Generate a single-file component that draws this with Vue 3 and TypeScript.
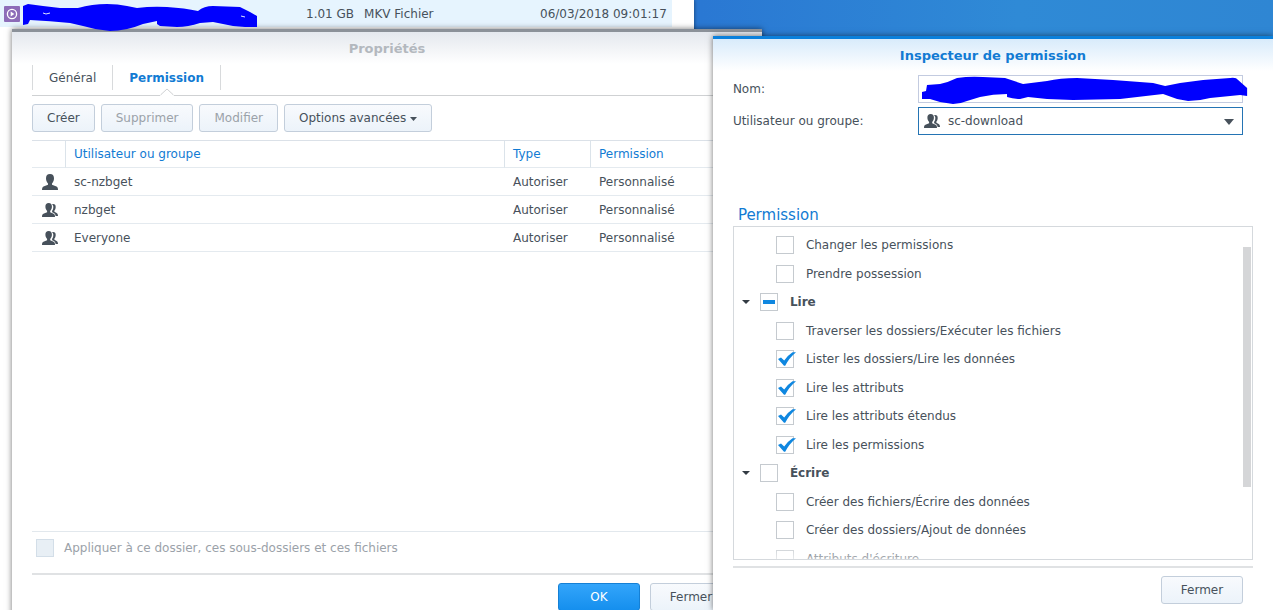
<script setup lang="ts">
import { ref } from 'vue'

interface Principal {
  name: string
  kind: 'user' | 'group'
  type: string
  permission: string
}

interface Node {
  label: string
  group?: boolean
  checked: boolean
  partial?: boolean
}

const principals: Principal[] = [
  { name: 'sc-nzbget', kind: 'user', type: 'Autoriser', permission: 'Personnalisé' },
  { name: 'nzbget', kind: 'group', type: 'Autoriser', permission: 'Personnalisé' },
  { name: 'Everyone', kind: 'group', type: 'Autoriser', permission: 'Personnalisé' },
]

const nodes = ref<Node[]>([
  { label: 'Changer les permissions', checked: false },
  { label: 'Prendre possession', checked: false },
  { label: 'Lire', group: true, checked: false, partial: true },
  { label: 'Traverser les dossiers/Exécuter les fichiers', checked: false },
  { label: 'Lister les dossiers/Lire les données', checked: true },
  { label: 'Lire les attributs', checked: true },
  { label: 'Lire les attributs étendus', checked: true },
  { label: 'Lire les permissions', checked: true },
  { label: 'Écrire', group: true, checked: false },
  { label: 'Créer des fichiers/Écrire des données', checked: false },
  { label: 'Créer des dossiers/Ajout de données', checked: false },
  { label: "Attributs d'écriture", checked: false },
])

const account = ref('sc-download')
const fileName = ref('')
</script>

<template>
  <main class="desktop">
    <section class="files">
      <div class="file-row">
        <svg class="media" viewBox="0 0 16 16" aria-hidden="true">
          <rect width="16" height="16" rx="1" fill="#8d6cb8" />
          <circle cx="8" cy="8" r="4.6" fill="none" stroke="#fff" stroke-width="1.3" />
          <path d="M6.7 5.6v4.8L10.3 8z" fill="#fff" />
        </svg>
        <svg class="name-mask" viewBox="22 3 236 29" aria-hidden="true">
          <path fill="#0000fe" d="M23 6L28 4L43 6L60 8L78 8Q92 4 107 4Q118 4 127 6L137 8Q152 6 167 7Q185 8 198 11Q204 6 213 6L240 7L250 12L257 16V27H245L233 26L213 22L200 23Q188 27 177 27L160 26L157 24V21L143 24Q126 31 110 31Q96 30 83 26L70 23Q50 21 30 20L28 24L23 25Z" />
          <path d="M43 13l3 1 4-1M241 16l4 1" fill="none" stroke="#dfe6ff" />
        </svg>
        <span class="size">1.01 GB</span>
        <span class="kind">MKV Fichier</span>
        <time class="date">06/03/2018 09:01:17</time>
      </div>
    </section>

    <section class="window properties">
      <h1 class="title">Propriétés</h1>
      <nav class="tabs">
        <button class="tab" type="button">Général</button>
        <button class="tab active" type="button">
          Permission
          <svg class="notch" viewBox="0 0 14 8" aria-hidden="true">
            <path d="M0 8V6.500L7 .7 14 6.500V8z" fill="#fff" />
            <path d="M0 7.500L1 6.500 7 1l6 5.500 1 1" fill="none" stroke="#cfd1d3" />
          </svg>
        </button>
      </nav>
      <div class="toolbar">
        <button class="btn" type="button">Créer</button>
        <button class="btn" type="button" disabled>Supprimer</button>
        <button class="btn" type="button" disabled>Modifier</button>
        <button class="btn" type="button">
          Options avancées
          <svg class="caret" viewBox="0 0 7 4" aria-hidden="true"><path d="M0 0h7L3.500 4z" fill="currentColor" /></svg>
        </button>
      </div>
      <div class="grid">
        <table>
          <colgroup><col class="c-icon" /><col /><col class="c-type" /><col class="c-perm" /></colgroup>
          <thead>
            <tr>
              <th></th>
              <th>Utilisateur ou groupe</th>
              <th>Type</th>
              <th>Permission</th>
            </tr>
          </thead>
          <tbody>
            <tr v-for="p in principals" :key="p.name">
              <td class="icon-cell">
                <svg v-if="p.kind === 'user'" class="who" viewBox="0 0 16 16" aria-hidden="true">
                  <path d="M8 0C5.300 0 4 1.600 4 4.200c0 2.300.9 4.200 2 5.200v1.400L1.500 12.500C.5 13 0 14 0 16h16c0-2-.5-3-1.500-3.500L10 10.800V9.400c1.100-1 2-2.900 2-5.200C12 1.600 10.700 0 8 0z" fill="#47515b" />
                </svg>
                <svg v-else class="who" viewBox="0 0 16 16" aria-hidden="true">
                  <path d="M10 2.200c2.300-.6 3.900.6 3.700 3-.1 1.600-.6 2.600-1.300 3.400v1.200l2.200 1.200c1 .6 1.400 1.500 1.400 3h-2.400c-.2-1.700-.9-2.600-2.300-3.200l-1.200-.6V8.800c.9-1.100 1.200-2.400 1.200-4 0-1-.4-1.900-1.300-2.600z" fill="#47515b" />
                  <path d="M6.700 1C4.500 1 3.400 2.300 3.400 4.500c0 2 .7 3.500 1.700 4.400v1.300l-3.700 1.600C.4 12.300 0 13.200 0 15h13c0-1.800-.4-2.700-1.400-3.200l-3.400-1.600V8.900c1-.9 1.700-2.400 1.700-4.400C9.900 2.300 8.900 1 6.700 1z" fill="#47515b" />
                </svg>
              </td>
              <td>{{ p.name }}</td>
              <td>{{ p.type }}</td>
              <td>{{ p.permission }}</td>
            </tr>
          </tbody>
        </table>
      </div>
      <label class="apply">
        <input class="check" type="checkbox" disabled />
        <span>Appliquer à ce dossier, ces sous-dossiers et ces fichiers</span>
      </label>
      <footer class="actions">
        <button class="btn primary wide" type="button">OK</button>
        <button class="btn wide" type="button">Fermer</button>
      </footer>
    </section>

    <section class="window inspector">
      <h2 class="title">Inspecteur de permission</h2>
      <div class="form">
        <label for="file-name">Nom:</label>
        <div class="field">
          <input id="file-name" v-model="fileName" class="text" type="text" readonly />
          <svg class="field-mask" viewBox="921 76 327 29" preserveAspectRatio="none" aria-hidden="true">
            <path fill="#0000fe" d="M922 92L926 91L927 85L940 84Q949 82 957 78Q970 76 983 77L1005 78L1023 84L1047 81Q1060 78 1077 78L1113 80L1153 83L1165 86L1180 83L1203 80L1230 78Q1236 77 1238 80L1247 88V96L1240 95L1210 98Q1199 101 1188 101L1177 99L1163 94L1120 99L1073 100L1047 99L1028 97L1020 99Q1013 99 1007 97V94Q993 94 980 97L967 101Q960 104 953 104L940 102L930 99H922Z" />
          </svg>
        </div>
        <label for="account">Utilisateur ou groupe:</label>
        <div class="field">
          <select id="account" v-model="account" class="select">
            <option value="sc-download">sc-download</option>
          </select>
          <svg class="who select-icon" viewBox="0 0 16 16" aria-hidden="true">
            <path d="M10 2.200c2.300-.6 3.900.6 3.700 3-.1 1.600-.6 2.600-1.300 3.400v1.200l2.200 1.200c1 .6 1.400 1.500 1.400 3h-2.400c-.2-1.700-.9-2.600-2.300-3.200l-1.200-.6V8.800c.9-1.100 1.200-2.400 1.200-4 0-1-.4-1.900-1.300-2.600z" fill="#47515b" />
            <path d="M6.700 1C4.500 1 3.400 2.300 3.400 4.500c0 2 .7 3.500 1.700 4.400v1.300l-3.700 1.600C.4 12.300 0 13.200 0 15h13c0-1.800-.4-2.700-1.400-3.200l-3.400-1.600V8.900c1-.9 1.700-2.400 1.700-4.400C9.900 2.300 8.900 1 6.700 1z" fill="#47515b" />
          </svg>
          <svg class="select-arrow" viewBox="0 0 10 6" aria-hidden="true"><path d="M0 0h10L5 6z" fill="#47515b" /></svg>
        </div>
      </div>
      <h3 class="section">Permission</h3>
      <div class="tree">
        <ul>
          <li v-for="n in nodes" :key="n.label" :class="{ group: n.group }">
            <svg v-if="n.group" class="expander" viewBox="0 0 8 4" aria-hidden="true"><path d="M0 0h8L4 4z" fill="#333b43" /></svg>
            <label>
              <span class="box">
                <input v-model="n.checked" class="check" type="checkbox" :indeterminate="n.partial" />
                <svg v-if="n.checked" class="tick" viewBox="0 0 20 18" aria-hidden="true">
                  <path d="M2 9L5 7.500 8.200 10.600Q12 5 16.500 2.200H20Q13 8 9.200 15.800H8z" fill="#0f87e0" />
                </svg>
              </span>
              <span>{{ n.label }}</span>
            </label>
          </li>
        </ul>
        <div class="thumb"></div>
      </div>
      <footer class="actions">
        <button class="btn wide" type="button">Fermer</button>
      </footer>
    </section>
  </main>
</template>

<style>
body {
  margin: 0;
  overflow: hidden;
}
</style>

<style scoped>
* {
  box-sizing: border-box;
}

.desktop {
  position: relative;
  height: 100vh;
  overflow: hidden;
  background: linear-gradient(90deg, #2a78d3 55%, #2f8ad6 80%, #2f86d3);
  color: #47515b;
  font: 12px/18px "DejaVu Sans", Verdana, sans-serif;
}

button,
input,
select {
  margin: 0;
  color: inherit;
  font: inherit;
}

.files {
  position: absolute;
  inset: 0 auto 0 0;
  width: 694px;
  padding-right: 22px;
  background: #fff;
  box-shadow: 0 0 4px rgba(0, 0, 0, 0.5);
}

.file-row {
  display: flex;
  align-items: center;
  height: 27px;
  padding-left: 4px;
  background: #e6f4fe;
}

.media {
  width: 16px;
  height: 16px;
}

.name-mask {
  position: absolute;
  z-index: 3;
  left: 22px;
  top: 3px;
  width: 236px;
  height: 29px;
}

.size {
  margin-left: 286px;
}

.kind {
  margin-left: 10px;
}

.date {
  width: 132px;
  margin-left: auto;
}

.window {
  position: absolute;
  display: flex;
  flex-direction: column;
  padding: 0 20px;
  background: #fff;
  box-shadow: 0 0 6px rgba(0, 0, 0, 0.55);
}

.properties {
  z-index: 1;
  left: 12px;
  top: 29px;
  bottom: -13px;
  width: 750px;
  border-top: 3px solid #8b9199;
  background: linear-gradient(#e4e8ee, #fff 32px);
}

.inspector {
  z-index: 2;
  left: 56%;
  right: 0;
  top: 36px;
  bottom: 0;
  border-top: 3px solid #0a80dc;
  background: linear-gradient(#d8ebfb, #fff 32px);
}

.title {
  margin: 0;
  font-size: 13px;
  line-height: 33px;
  text-align: center;
}

.properties .title {
  color: #b3b8be;
}

.inspector .title,
.section {
  color: #127bd3;
}

.tabs {
  display: flex;
  height: 31px;
  border-bottom: 1px solid #cfd1d3;
}

.tab {
  position: relative;
  height: 25px;
  padding: 0 16px;
  border: 0;
  border-left: 1px solid #d8dadc;
  background: none;
}

.tab.active {
  border-right: 1px solid #d8dadc;
  color: #127bd3;
  font-weight: bold;
}

.notch {
  position: absolute;
  left: 50%;
  top: 23px;
  width: 14px;
  height: 8px;
  margin-left: -7px;
}

.toolbar {
  display: flex;
  gap: 6px;
  padding: 8px 0;
}

.btn {
  height: 28px;
  padding: 0 14px;
  border: 1px solid #c3cedb;
  border-radius: 3px;
  background: linear-gradient(#f8fafd, #ecf3fa);
  white-space: nowrap;
}

.btn:disabled {
  color: #9ba2a9;
}

.btn.wide {
  width: 82px;
}

.btn.primary {
  border-color: #1580d5;
  background: linear-gradient(#33a5fb, #158fee);
  color: #fff;
}

.caret {
  width: 7px;
  height: 4px;
  vertical-align: middle;
}

.grid {
  flex: 1;
  min-height: 0;
  border-top: 1px solid #dbe1e8;
  border-bottom: 1px solid #e2e8ed;
}

table {
  width: 100%;
  border-collapse: separate;
  border-spacing: 0;
  table-layout: fixed;
}

.c-icon {
  width: 34px;
}

.c-type {
  width: 86px;
}

.c-perm {
  width: 151px;
}

th,
td {
  height: 28px;
  padding: 0 8px;
  border-bottom: 1px solid #e4eaef;
  text-align: left;
  font-weight: normal;
}

th {
  height: 27px;
  border-right: 1px solid #dbe3ea;
  color: #127bd3;
}

th:last-child {
  border-right: 0;
}

td.icon-cell {
  padding: 0 0 0 10px;
}

.who {
  display: block;
  width: 16px;
  height: 16px;
}

.apply {
  display: flex;
  align-items: center;
  gap: 10px;
  height: 41px;
  padding: 0 4px 10px;
  color: #9ba2a9;
}

.check {
  display: block;
  width: 18px;
  height: 18px;
  border: 1px solid #c5cacf;
  background: #fff;
  appearance: none;
}

.check:disabled {
  border-color: #d3dee8;
  background: #e8eff5;
}

.check:indeterminate {
  background: linear-gradient(#0f87e0, #0f87e0) center / 12px 4px no-repeat #fff;
}

.actions {
  display: flex;
  justify-content: flex-end;
  gap: 10px;
  padding: 8px 10px 12px;
  border-top: 2px solid #e0e2e4;
}

.form {
  display: grid;
  grid-template-columns: 175px 1fr;
  align-items: center;
  gap: 4px 10px;
  padding: 3px 10px 0 0;
}

.field {
  position: relative;
  height: 28px;
}

.text,
.select {
  display: block;
  width: 100%;
  height: 28px;
  padding: 0 29px;
  border: 1px solid #c3cbe0;
  border-radius: 0;
  background: #fff;
  appearance: none;
}

.select {
  border-color: #2474b4;
}

.field-mask {
  position: absolute;
  left: 3px;
  top: 1px;
  width: calc(100% + 2px);
  height: 29px;
}

.select-icon,
.select-arrow {
  position: absolute;
  top: 6px;
  left: 6px;
  pointer-events: none;
}

.select-arrow {
  top: 12px;
  right: 9px;
  left: auto;
  width: 10px;
  height: 6px;
}

.section {
  margin: 70px 0 0;
  padding: 0 5px 1px;
  font-size: 15px;
  font-weight: normal;
  line-height: 20px;
}

.tree {
  position: relative;
  flex: 1;
  min-height: 0;
  padding: 4px 0 0;
  border: 1px solid #d5d9dd;
}

.tree::after {
  content: "";
  position: absolute;
  left: 0;
  right: 10px;
  bottom: 0;
  height: 10px;
  background: linear-gradient(rgba(255, 255, 255, 0.2), rgba(255, 255, 255, 0.6));
  pointer-events: none;
}

ul {
  height: 100%;
  margin: 0;
  padding: 0;
  overflow: hidden;
  list-style: none;
}

li {
  display: flex;
  align-items: center;
  height: 28px;
  padding-left: 42px;
}

li:nth-child(even) {
  height: 29px;
}

li.group {
  gap: 10px;
  padding-left: 8px;
  font-weight: bold;
}

li label {
  display: flex;
  align-items: center;
  gap: 12px;
}

.expander {
  width: 8px;
  height: 4px;
}

.box {
  position: relative;
}

.tick {
  position: absolute;
  left: 0;
  top: 0;
  width: 20px;
  height: 18px;
}

.thumb {
  position: absolute;
  top: 20px;
  right: 1px;
  width: 8px;
  height: 240px;
  background: #d5d6d8;
}

.inspector .actions {
  margin-top: 6px;
  padding-bottom: 6px;
}
</style>
